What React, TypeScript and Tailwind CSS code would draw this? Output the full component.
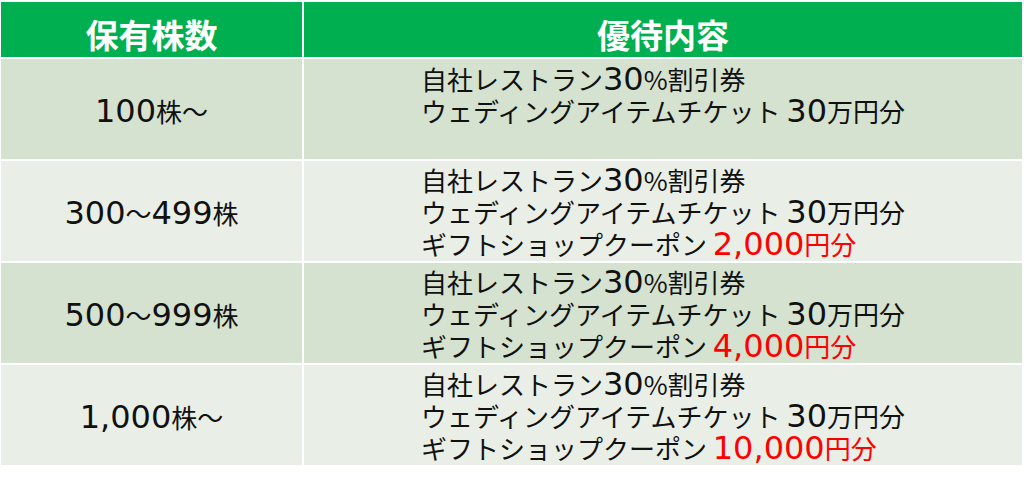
const rows = [
  { shares: '100株〜', coupon: null as string | null },
  { shares: '300〜499株', coupon: '2,000円分' },
  { shares: '500〜999株', coupon: '4,000円分' },
  { shares: '1,000株〜', coupon: '10,000円分' },
];

// digits in the reference come from a wider, taller latin face
function Mixed({ text }: { text: string }) {
  const parts = text.split(/([0-9,]+)/);
  return (
    <>
      {parts.map((p, i) =>
        /^[0-9,]+$/.test(p) ? (
          <span key={i} className="font-['DejaVu_Sans'] text-[32px]">
            {p}
          </span>
        ) : (
          <span key={i}>{p}</span>
        )
      )}
    </>
  );
}

export default function App() {
  return (
    <div
      className="w-[1024px] h-[480px] bg-white pl-[1px] pt-[2px] text-[#111]"
      style={{ fontFamily: '"Noto Sans CJK JP", "Noto Sans", sans-serif' }}
    >
      <div className="grid grid-cols-[301px_718px] grid-rows-[55px_100px_100px_100px_100px] gap-[2px]">
        {/* Header */}
        <div className="bg-[#00B050] text-white text-[33px] font-bold flex items-center justify-center leading-none pt-[9px]">
          保有株数
        </div>
        <div className="bg-[#00B050] text-white text-[33px] font-bold flex items-center justify-center leading-none pt-[9px]">
          優待内容
        </div>

        {rows.map((row, i) => {
          const bg = i % 2 === 0 ? 'bg-[#D5E2D0]' : 'bg-[#E9EFE7]';
          return [
            <div key={`s${i}`} className={`${bg} flex items-center justify-center text-[26px] leading-[31px] pt-[4px]`}>
              <div>
                <Mixed text={row.shares} />
              </div>
            </div>,
            <div key={`c${i}`} className={`${bg} flex items-center justify-center text-[26px] leading-[31px] pt-[2px]`}>
              <div className="text-left">
                <div>
                  <Mixed text="自社レストラン30%割引券" />
                </div>
                <div>
                  <Mixed text="ウェディングアイテムチケット 30万円分" />
                </div>
                {row.coupon ? (
                  <div>
                    <Mixed text="ギフトショップクーポン " />
                    <span className="text-[#FF0000]">
                      <Mixed text={row.coupon} />
                    </span>
                  </div>
                ) : (
                  <div>&nbsp;</div>
                )}
              </div>
            </div>,
          ];
        })}
      </div>
    </div>
  );
}
